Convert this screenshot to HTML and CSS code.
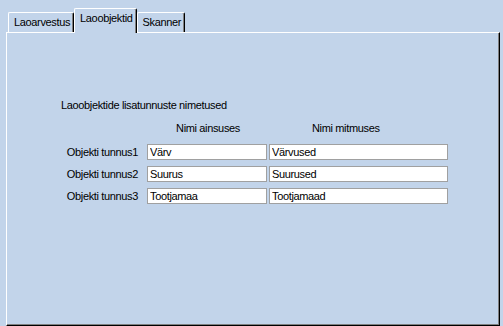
FILE: index.html
```html
<!DOCTYPE html>
<html>
  <head>
    <title>Laoobjektid</title>
    <meta charset="utf-8" />
    <link rel="stylesheet" href="styles.css">
  </head>
  <body>
    <div class="tabs">
      <div class="tab">Laoarvestus</div>
      <div class="tab active">Laoobjektid</div>
      <div class="tab">Skanner</div>
    </div>
    <div class="panel">
      <div class="title">Laoobjektide lisatunnuste nimetused</div>
      <div class="form">
        <div></div>
        <div class="head head-one">Nimi ainsuses</div>
        <div class="head head-many">Nimi mitmuses</div>

        <label class="label">Objekti tunnus1</label>
        <input class="field field-one" type="text" value="Värv" />
        <input class="field field-many" type="text" value="Värvused" />

        <label class="label">Objekti tunnus2</label>
        <input class="field field-one" type="text" value="Suurus" />
        <input class="field field-many" type="text" value="Suurused" />

        <label class="label">Objekti tunnus3</label>
        <input class="field field-one" type="text" value="Tootjamaa" />
        <input class="field field-many" type="text" value="Tootjamaad" />
      </div>
    </div>
  </body>
</html>
```

FILE: styles.css
```css
	body {
		font-family: "Liberation Sans", Arial, sans-serif;
		font-size: 11px;
		letter-spacing: -0.35px;
		margin: 0;
		padding: 0;
		color: #000;
		background: #c2d4ea;
		height: 326px;
		overflow: hidden;
	}

	/* Tabs */

	.tabs {
		display: flex;
		align-items: flex-end;
		padding: 8px 0 0 8px;
		height: 24px;
		position: relative;
		z-index: 1;
	}

	.tab {
		box-sizing: border-box;
		height: 20px;
		line-height: 18px;
		padding: 0 3px 0 5px;
		border-top: 1px solid #fff;
		border-left: 1px solid #fff;
		border-right: 1px solid #000;
		border-radius: 2px 2px 0 0;
		box-shadow: inset -1px 0 0 #808080;
		background: #c2d4ea;
		white-space: nowrap;
	}

	.tab.active {
		height: 25px;
		margin-bottom: -1px;
		padding: 0 3px 3px 5px;
	}

	/* Panel */

	.panel {
		box-sizing: border-box;
		margin-left: 6px;
		width: 494px;
		height: 294px;
		border-top: 1px solid #fff;
		border-left: 1px solid #fff;
		border-right: 1px solid #000;
		border-bottom: 1px solid #000;
		box-shadow: inset -1px -1px 0 #808080;
		padding: 66px 0 0 54px;
	}

	.title {
		line-height: 13px;
		height: 13px;
		white-space: nowrap;
	}

	.form {
		display: grid;
		grid-template-columns: 86px 122px 179px;
		grid-auto-rows: 16px;
		row-gap: 6px;
		margin-top: 10px;
	}

	.head {
		line-height: 13px;
		height: 13px;
		white-space: nowrap;
	}

	.head-one {
		text-align: center;
		padding-right: 2px;
		padding-left: 2px;
	}

	.head-many {
		padding-left: 43px;
	}

	.form > .head {
		margin-bottom: -4px;
	}

	.label {
		text-align: right;
		line-height: 16px;
		padding-right: 9px;
		white-space: nowrap;
	}

	.field {
		box-sizing: border-box;
		height: 16px;
		margin: 0;
		padding: 0 2px;
		border: 1px solid #a0a0a0;
		background: #fff;
		font: 11px "Liberation Sans", Arial, sans-serif;
		letter-spacing: -0.35px;
		color: #000;
		outline: none;
	}

	.field-one {
		width: 120px;
	}

	.field-many {
		width: 179px;
	}
```
